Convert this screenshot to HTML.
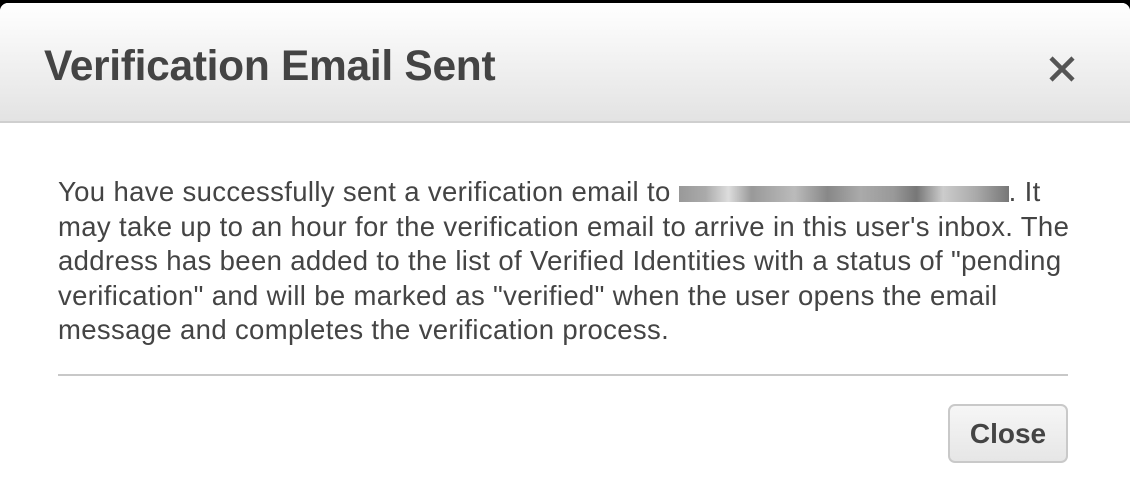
<!DOCTYPE html>
<html><head><style>
html,body{margin:0;padding:0;width:1130px;height:500px;overflow:hidden;background:#000;font-family:"Liberation Sans",Arial,sans-serif}
.d{position:absolute;left:0;top:3px;width:1130px;height:497px;background:#fff;border-radius:8px 8px 0 0;overflow:hidden}
.h{position:absolute;left:0;top:0;width:1130px;height:118px;background:linear-gradient(#fff,#e3e3e3);border-bottom:2px solid #cfcfcf}
.t{position:absolute;left:44px;top:40px;font-size:42.5px;font-weight:bold;color:#444;letter-spacing:-0.3px}
.x{position:absolute;left:1046px;top:50px}
.b{position:absolute;left:58px;top:172px;font-size:27.5px;line-height:34.5px;color:#444;white-space:nowrap;letter-spacing:0.35px}
.em{display:inline-block;width:330px;height:16px;vertical-align:-1px;background:linear-gradient(90deg,#999 0,#aaa 8%,#ddd 15%,#999 22%,#bbb 35%,#888 45%,#aaa 55%,#999 65%,#777 72%,#ccc 80%,#aaa 90%,#777 100%)}
.hr{position:absolute;left:58px;top:371px;width:1010px;height:2px;background:#c8c8c8}
.btn{position:absolute;left:948px;top:401px;width:116px;height:55px;border:2px solid #c9c9c9;border-radius:7px;background:linear-gradient(#f6f6f6,#e6e6e6);font-size:28px;font-weight:bold;color:#444;text-align:center;line-height:55px}
</style></head><body>
<div class="d">
<div class="h"><div class="t">Verification Email Sent</div>
<svg class="x" width="32" height="32" viewBox="0 0 32 32"><path d="M5 5L27 27M27 5L5 27" stroke="#555" stroke-width="4.5" stroke-linecap="butt"/></svg></div>
<div class="b">You have successfully sent a verification email to <span class="em"></span>. It<br>may take up to an hour for the verification email to arrive in this user's inbox. The<br>address has been added to the list of Verified Identities with a status of "pending<br>verification" and will be marked as "verified" when the user opens the email<br>message and completes the verification process.</div>
<div class="hr"></div>
<div class="btn">Close</div>
</div>
</body></html>
